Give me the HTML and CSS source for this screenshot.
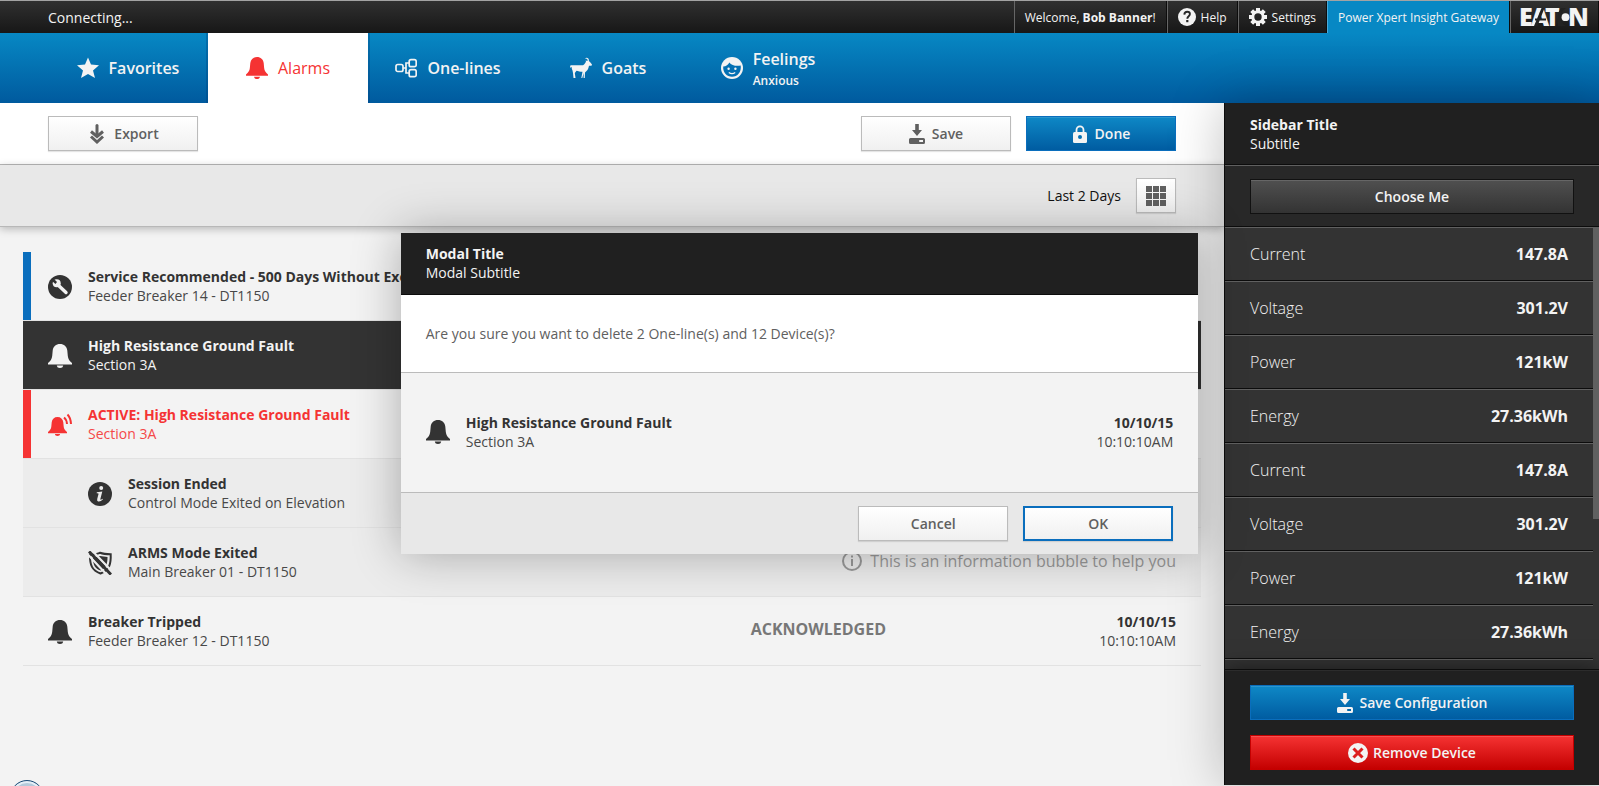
FILE: index.html
```html
<!DOCTYPE html>
<html lang="en">
<head>
<meta charset="utf-8">
<title>Power Xpert Insight Gateway</title>
<link rel="stylesheet" href="styles.css">
</head>
<body>
<svg class="sprite" aria-hidden="true">
  <symbol id="bell" viewBox="0 0 24 24"><path d="M12 0C8 0 5.200 2.600 4.700 6.500L4.200 12C3.900 15 2.500 17 0 19V20.500H24V19C21.500 17 20.100 15 19.800 12L19.300 6.500C18.800 2.600 16 0 12 0ZM8.800 21.500H15.200C15 23.200 13.800 24 12 24S9 23.200 8.800 21.500Z"/></symbol>
  <symbol id="save" viewBox="0 0 16 20"><path d="M6.200 0H9.800V6H13L8 12 3 6H6.200ZM1.500 14H14.500Q16 14 16 15.500V18.500Q16 20 14.500 20H1.500Q0 20 0 18.500V15.500Q0 14 1.500 14ZM10.200 16V18H14V16Z" fill-rule="evenodd"/></symbol>
</svg>
<div class="app">
  <header class="topbar">
    <span class="status">Connecting...</span>
    <div class="user"><span>Welcome, <b>Bob Banner</b>!</span></div>
    <a class="user" href="#"><svg class="i18" viewBox="0 0 18 18"><circle cx="9" cy="9" r="9"/><path d="M6.300 6.600C6.500 4.700 7.600 3.800 9.200 3.800 10.800 3.800 11.900 4.700 11.900 6.100 11.900 8.300 9.300 8.200 9.300 10.700" fill="none" stroke="#262626" stroke-width="1.900"/><rect x="8.200" y="12" width="2.200" height="2.200" fill="#262626"/></svg>Help</a>
    <a class="user" href="#"><svg class="i18" viewBox="0 0 18 18"><circle cx="9" cy="9" r="5.200" fill="none" stroke="currentColor" stroke-width="3"/><path d="M9 0V3.500M9 14.500V18M0 9H3.500M14.500 9H18M2.700 2.700 5 5M13 13 15.300 15.300M15.300 2.700 13 5M5 13 2.700 15.300" stroke="currentColor" stroke-width="4"/></svg>Settings</a>
    <a class="user gateway" href="#">Power Xpert Insight Gateway</a>
    <a class="user brand" href="#" aria-label="Eaton"><svg class="logo" viewBox="0 0 67 18"><text x="-2" y="18">E</text><text x="10" y="18">A</text><text x="24" y="18">T</text><path class="cut" d="M13 18 20.500 0H23.500L16.500 18ZM14 10.500H25V12.500H14ZM45 0C38 4 38 14 45 18L37 18 37 5 40 0Z"/><circle cx="44.500" cy="9.200" r="3.900"/><text x="47" y="18">N</text></svg></a>
  </header>
  <nav class="nav">
    <a class="tab" href="#"><svg class="i22" viewBox="0 0 22 22"><path d="M11 0.500 14 7.600 22 8.300 16 13.400 18 21 11 17 4 21 6 13.400 0 8.300 8 7.600Z"/></svg>Favorites</a>
    <a class="tab active" href="#"><svg class="i22"><use href="#bell"/></svg>Alarms</a>
    <a class="tab" href="#"><svg class="i22" viewBox="0 0 22 22"><g fill="none" stroke="currentColor" stroke-width="1.700"><rect x="1" y="7.500" width="7" height="7" rx="1.800"/><rect x="14.200" y="2.700" width="7" height="7" rx="1.800"/><rect x="14.200" y="12.700" width="7" height="7" rx="1.800"/><path d="M8 11H11M14 6H11V16H14"/></g></svg>One-lines</a>
    <a class="tab" href="#"><svg class="i22" viewBox="0 0 22 22"><path d="M0 9C1 8 2 8.500 3 8.300L13 8.300C14.500 7.500 15.500 5.500 16 4.500L15.500 3.500 17.500 4C18 2.500 17 1 14.800 1.500 17 -.500 19.500 1.500 18.800 4L20 5 22 7.500 21.500 8.700 19 8.800C18.500 11 18 13 16.500 14L15 15.500 14.800 21H13.600L13.700 16 12.300 21H11.300L12.500 14.800C10.500 14.800 8 14.300 6.500 13.800L4.800 16 5.500 21H3.500L3 16 2.500 13.500C1.500 12 1.800 11 1.800 9.800L.600 11Z"/></svg>Goats</a>
    <a class="tab" href="#"><svg class="i22" viewBox="0 0 22 22"><circle cx="11" cy="11" r="11"/><path class="face" d="M2.200 9.600C5 9.200 7.500 7.800 8.300 5.400 10.500 8.300 15 9.500 19.700 8.500 20.600 15 16.500 19.800 11 19.800 6 19.800 1.800 16 2.200 9.600Z"/><circle cx="7.600" cy="11.800" r="1.200"/><circle cx="14.400" cy="11.800" r="1.200"/><path d="M7.800 15.500Q11 17.800 14.200 15.500" fill="none" stroke="currentColor" stroke-width="1.300"/></svg><span class="double">Feelings<small>Anxious</small></span></a>
  </nav>
  <div class="body">
    <main class="main">
      <div class="bar">
        <button class="btn export"><svg class="i20" viewBox="0 0 14 20"><g fill="none" stroke="currentColor" stroke-width="3"><path d="M7 1.500V11" stroke-linecap="round"/><path d="M1 7.500 7 12.500 13 7.500M1 12.500 7 18 13 12.500"/></g></svg>Export</button>
        <button class="btn"><svg class="i16"><use href="#save"/></svg>Save</button>
        <button class="btn blue"><svg class="i16" viewBox="0 0 16 20"><path d="M4.500 8V6A3.500 3.700 0 0 1 11.500 6V8" fill="none" stroke="currentColor" stroke-width="1.800"/><rect x="1" y="8" width="14" height="11" rx="1.500"/><circle class="face" cx="8" cy="13" r="2"/></svg>Done</button>
      </div>
      <div class="bar filter">
        <span>Last 2 Days</span>
        <button class="btn square" aria-label="Calendar"><svg class="i20" viewBox="0 0 20 20"><path d="M0 0h6v6H0zM7 0h6v6H7zM14 0h6v6h-6zM0 7h6v6H0zM7 7h6v6H7zM14 7h6v6h-6zM0 14h6v6H0zM7 14h6v6H7zM14 14h6v6h-6z"/></svg></button>
      </div>
      <div class="list">
        <div class="row service"><svg class="i24" viewBox="0 0 24 24"><circle cx="12" cy="12" r="12"/><path d="M9.500 9.500 18 17.500" stroke="#f3f3f3" stroke-width="3.400" stroke-linecap="round"/><circle cx="8.700" cy="8.200" r="4" fill="#f3f3f3"/><path d="M4 6 5.500 3.500 9 7 7.500 9Z"/></svg><div class="text"><b>Service Recommended - 500 Days Without Exercise</b><span>Feeder Breaker 14 - DT1150</span></div></div>
        <div class="row dark"><svg class="i24"><use href="#bell"/></svg><div class="text"><b>High Resistance Ground Fault</b><span>Section 3A</span></div></div>
        <div class="row alert"><svg class="i24" viewBox="0 0 24 24"><use href="#bell" x="0" y="4" width="19" height="19"/><path d="M16 4.500C18 6 18.800 8.500 19 11M19.500 1.500C22 4 22.800 7.500 23 11" fill="none" stroke="currentColor" stroke-width="2"/></svg><div class="text"><b>ACTIVE: High Resistance Ground Fault</b><span>Section 3A</span></div></div>
        <div class="row sub"><svg class="i24" viewBox="0 0 24 24"><circle cx="12" cy="12" r="12"/><circle cx="13.200" cy="6" r="2" fill="#ececec"/><path d="M8.800 10.200 14.300 9.500 12.300 17.200Q12.300 18.300 14.500 16.700L15 17.300Q12.500 20 10.200 19.500 8.700 19 9.200 17L10.600 11.700Q10.500 11 8.700 11.200Z" fill="#ececec"/></svg><div class="text"><b>Session Ended</b><span>Control Mode Exited on Elevation</span></div></div>
        <div class="row sub"><svg class="i24" viewBox="0 0 24 24"><path d="M2 4C7 4 9 3 12 1.800 15 3 18 3.300 22.700 3.300 23 12 22 19 12.500 22.500 4 19.500 1.800 14 2 4Z" fill="none" stroke="currentColor" stroke-width="2"/><path d="M5 7 12 5 19.500 6C19.500 13 18 17 12.500 19.500 7 17.500 5 14 5 7Z"/><path d="M-1 2.500 20 25M3 -1.500 25 21.500" stroke="#ececec" stroke-width="2.200"/><path d="M1 0.500 23 23.500" stroke="currentColor" stroke-width="3"/></svg><div class="text"><b>ARMS Mode Exited</b><span>Main Breaker 01 - DT1150</span></div><div class="hint"><svg class="i20" viewBox="0 0 20 20"><circle cx="10" cy="10" r="9" fill="none" stroke="currentColor" stroke-width="2"/><path d="M9 4.500h2v2H9zM9 8h2v7H9z"/></svg>This is an information bubble to help you</div></div>
        <div class="row"><svg class="i24"><use href="#bell"/></svg><div class="text"><b>Breaker Tripped</b><span>Feeder Breaker 12 - DT1150</span></div><strong class="ack">ACKNOWLEDGED</strong><div class="text time"><b>10/10/15</b><span>10:10:10AM</span></div></div>
      </div>
    </main>
    <aside class="sidebar">
      <div class="side-head"><b>Sidebar Title</b><span>Subtitle</span></div>
      <div class="side-action"><button class="btn grey">Choose Me</button></div>
      <div class="scroll">
        <dl class="values">
          <div><dt>Current</dt><dd>147.8A</dd></div>
          <div><dt>Voltage</dt><dd>301.2V</dd></div>
          <div><dt>Power</dt><dd>121kW</dd></div>
          <div><dt>Energy</dt><dd>27.36kWh</dd></div>
          <div><dt>Current</dt><dd>147.8A</dd></div>
          <div><dt>Voltage</dt><dd>301.2V</dd></div>
          <div><dt>Power</dt><dd>121kW</dd></div>
          <div><dt>Energy</dt><dd>27.36kWh</dd></div>
          <div></div>
        </dl>
        <div class="track"><div class="thumb"></div></div>
      </div>
      <div class="side-foot">
        <button class="btn blue"><svg class="i16"><use href="#save"/></svg>Save Configuration</button>
        <button class="btn red"><svg class="i20" viewBox="0 0 20 20"><circle cx="10" cy="10" r="10"/><path d="M5.500 5.500 14.500 14.500M14.500 5.500 5.500 14.500" stroke="#dc1d1d" stroke-width="3"/></svg>Remove Device</button>
      </div>
    </aside>
  </div>
  <div class="orb"></div>
  <div class="overlay">
    <section class="modal" role="dialog" aria-labelledby="modal-title">
      <header class="modal-head"><b id="modal-title">Modal Title</b><span>Modal Subtitle</span></header>
      <p class="question">Are you sure you want to delete 2 One-line(s) and 12 Device(s)?</p>
      <div class="modal-item"><svg class="i24"><use href="#bell"/></svg><div class="text"><b>High Resistance Ground Fault</b><span>Section 3A</span></div><div class="text time"><b>10/10/15</b><span>10:10:10AM</span></div></div>
      <footer class="modal-foot"><button class="btn">Cancel</button><button class="btn ok">OK</button></footer>
    </section>
  </div>
</div>
</body>
</html>
```
FILE: styles.css
```css
* { box-sizing: border-box; }
body { margin: 0; font: 14px/19px "Open Sans", sans-serif; color: #333; background: #f3f3f3; }
a { color: inherit; text-decoration: none; }
b { font-weight: 700; }
svg { flex: none; fill: currentColor; }
.sprite { position: absolute; width: 0; height: 0; }
.i16 { width: 16px; height: 20px; }
.i18 { width: 18px; height: 18px; }
.i20 { width: 20px; height: 20px; }
.i22 { width: 22px; height: 22px; }
.i24 { width: 24px; height: 24px; }

.app { position: relative; display: flex; flex-direction: column; height: 100vh; overflow: hidden; border-top: 1px solid #a3a3a3; }

.topbar { display: flex; height: 32px; background: linear-gradient(#303030, #171717); color: #f3f3f3; }
.status { margin-right: auto; padding-left: 48px; line-height: 34px; }
.user { display: flex; align-items: center; gap: 5px; padding: 0 10px; font-size: 12px; border-left: 1px solid #666; border-right: 1px solid #0c0c0c; }
.gateway { background: #0788c4; border-left-color: #4aa9d8; }
.logo { width: 67px; height: 18px; overflow: visible; font: 800 25px "Open Sans", sans-serif; }
.cut { fill: #222; }

.nav { display: flex; height: 70px; flex: none; padding-left: 48px; background: linear-gradient(#0788c4, #005a9e); color: #f3f3f3; font-size: 16px; font-weight: 600; line-height: 22px; }
.tab { display: flex; align-items: center; justify-content: center; gap: 10px; width: 160px; }
.tab small { display: block; font-size: 12px; }
.double { padding-top: 4px; }
.active { background: #fff; color: #f53333; font-weight: 500; box-shadow: 0 0 0 2px rgba(0, 60, 120, .3); clip-path: inset(0 -2px); }
.face { fill: #0470b3; }

.body { display: flex; flex: 1; min-height: 0; }
.main { flex: 1; min-width: 0; }
.bar { display: flex; align-items: center; justify-content: flex-end; gap: 15px; height: 62px; padding: 0 48px; background: #fff; border-bottom: 1px solid #b8b8b8; }
.filter { position: relative; background: #e8e8e8; color: #111; box-shadow: 0 2px 8px rgba(0, 0, 0, .25); }
.export { margin-right: auto; }

.btn { display: inline-flex; align-items: center; justify-content: center; gap: 7px; width: 150px; height: 35px; padding: 0; border: 1px solid #bbb; background: linear-gradient(#fff, #f0f0f0); color: #606060; font: 600 14px/19px "Open Sans", sans-serif; box-shadow: 0 1px 1px rgba(0, 0, 0, .1); }
.square { width: 40px; }
.blue { border-color: #0a6ebd; background: linear-gradient(#0e88c6, #005ca1); color: #f3f3f3; box-shadow: inset 0 1px rgba(255, 255, 255, .12); }
.red { gap: 5px; border-color: #c40000; background: linear-gradient(#f53333, #c40000); color: #f3f3f3; box-shadow: inset 0 1px rgba(255, 255, 255, .15); }
.grey { border-color: #111; background: linear-gradient(#505050, #333); color: #f3f3f3; box-shadow: inset 0 1px #666; }
.ok { border: 2px solid #0a6ebd; }

.list { padding: 25px 23px; }
.row { display: flex; align-items: center; gap: 16px; height: 69px; padding: 0 25px; border-bottom: 1px solid #e2e2e2; white-space: nowrap; }
.row > svg { margin-top: 2px; }
.text { display: flex; flex-direction: column; flex: 1; }
.text span { color: #484848; }
.text.time { flex: 0 0 25%; text-align: right; }
.service { background: linear-gradient(90deg, #0a6ebd 8px, transparent 8px); }
.alert { color: #f53333; background: linear-gradient(90deg, #f53333 8px, transparent 8px); }
.row.service, .row.alert, .row.dark { background-clip: padding-box; }
.dark { background-color: #333; color: #f3f3f3; }
.dark .text span { color: #f3f3f3; }
.alert .text span { color: #f54848; }
.sub { padding-left: 65px; background: #ececec; }
.ack { padding-bottom: 3px; font-size: 16px; color: #777; margin-right: -8px; }
.hint { display: flex; align-items: center; gap: 8px; padding-bottom: 2px; font-size: 16px; color: #999; }

.sidebar { position: relative; display: flex; flex-direction: column; width: 375px; margin-bottom: 1px; border-left: 1px solid #0c0c0c; background: #202020; color: #f3f3f3; box-shadow: 0 0 50px rgba(0, 0, 0, .25); }
.side-head { display: flex; flex-direction: column; justify-content: center; height: 62px; padding: 0 25px; border-bottom: 1px solid #0c0c0c; }
.side-action { display: flex; align-items: center; height: 62px; padding: 0 25px; background: #282828; border-top: 1px solid #606060; border-bottom: 1px solid #0c0c0c; }
.side-action .btn, .side-foot .btn { width: 100%; }
.scroll { display: flex; flex: 1; min-height: 0; overflow: hidden; background: #333; }
.values { flex: 1; margin: 0; font-size: 16px; line-height: 22px; }
.values div { display: flex; align-items: center; justify-content: space-between; height: 54px; padding: 0 25px; border-top: 1px solid #606060; border-bottom: 1px solid #0c0c0c; }
dt { font-weight: 300; }
dd { margin: 0; font-weight: 700; }
.track { width: 6px; }
.thumb { height: 66%; background: #606060; }
.side-foot { position: relative; display: flex; flex-direction: column; gap: 15px; padding: 15px 25px; border-top: 1px solid #0c0c0c; box-shadow: inset 0 1px #2c2c2c, 0 0 20px rgba(0, 0, 0, .5); clip-path: inset(-30px 0 0 0); background: #202020; }

.orb { position: absolute; left: 10px; bottom: -28px; width: 34px; height: 34px; border: 1px solid #1f4e79; border-radius: 50%; background: #b4cadb; box-shadow: inset 0 0 0 2px #e4eff7; }

.overlay { position: absolute; inset: 0; display: flex; align-items: center; justify-content: center; }
.modal { width: calc(50% - 2px); box-shadow: 0 0 45px rgba(0, 0, 0, .3); background: #f3f3f3; }
.modal-head { display: flex; flex-direction: column; justify-content: center; height: 62px; padding: 0 25px 2px; border-bottom: 1px solid #0c0c0c; background: #202020; color: #f3f3f3; }
.question { margin: 0; padding: 29px 25px; background: #fff; border-bottom: 1px solid #bbb; color: #606060; }
.modal-item { display: flex; align-items: center; gap: 16px; height: 119px; padding: 0 25px 2px; }
.modal-foot { display: flex; align-items: center; justify-content: flex-end; gap: 15px; height: 62px; padding: 0 25px; border-top: 1px solid #bbb; background: #e8e8e8; }
```
